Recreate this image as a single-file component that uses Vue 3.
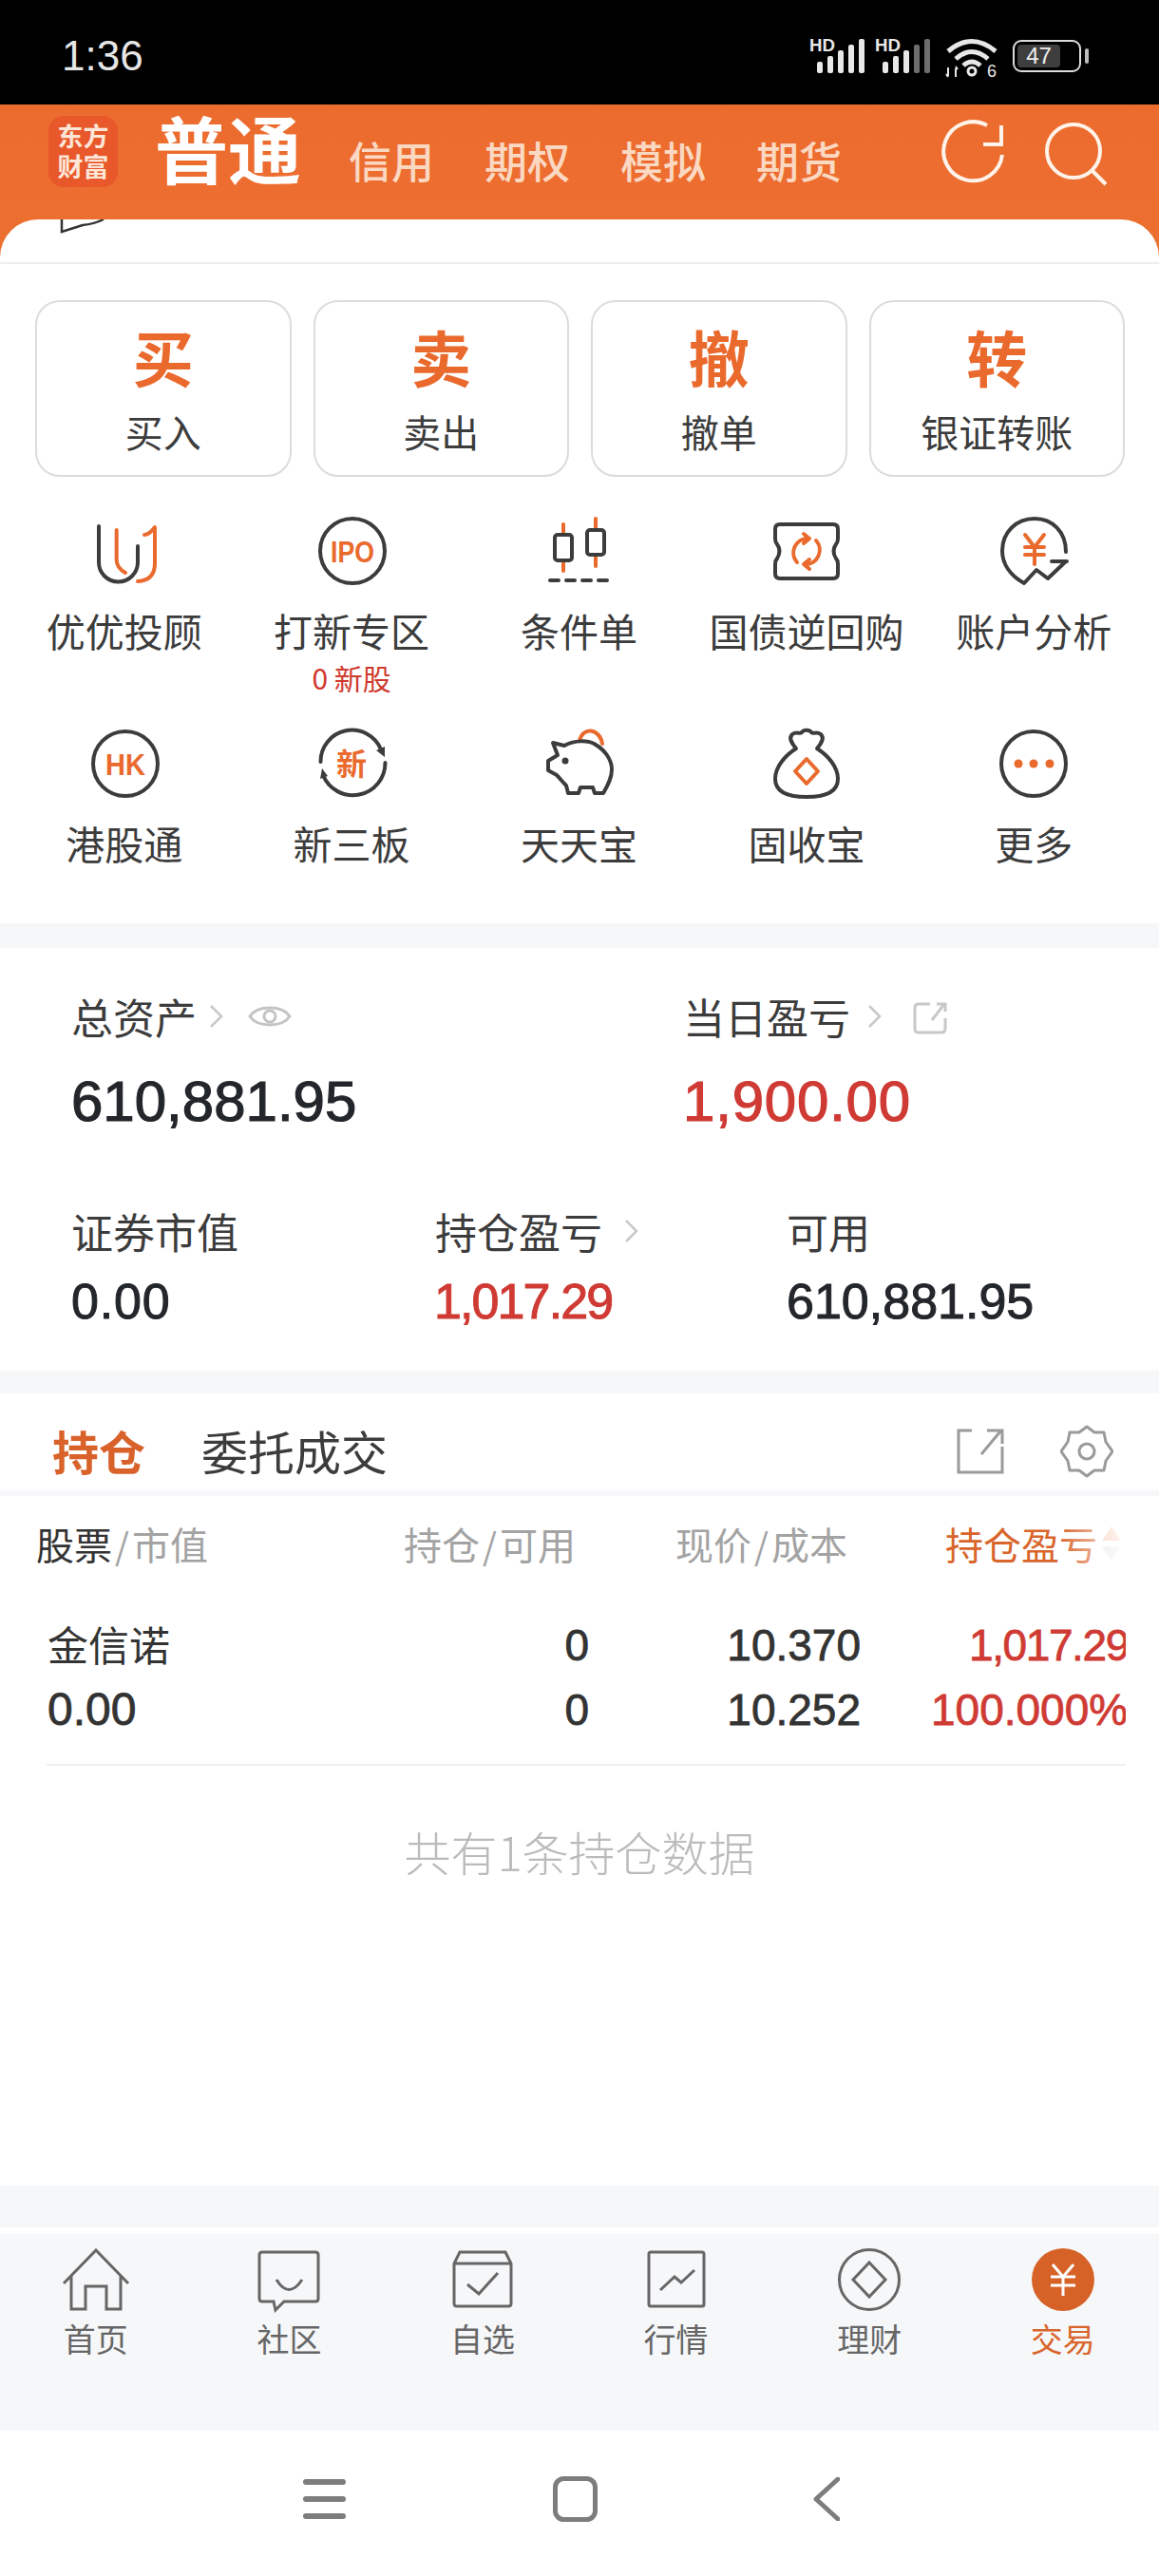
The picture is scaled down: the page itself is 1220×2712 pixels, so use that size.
<template>
  <div class="page">
    <!-- status bar -->
    <div class="statusbar">
      <span class="clock">1:36</span>
      <div class="status-icons">
        <svg v-for="(sig, i) in signals" :key="i" class="signal" width="60" height="38" viewBox="0 0 60 38">
          <text x="0" y="14" class="hd" textLength="27" lengthAdjust="spacingAndGlyphs">HD</text>
          <rect v-for="(b, j) in sig" :key="j" :x="8 + j * 11" :y="37 - b.h" width="6" :height="b.h" rx="2" :fill="b.c" />
        </svg>
        <svg class="wifi" width="56" height="42" viewBox="0 0 56 42">
          <g fill="none" stroke="#e8e8e8" stroke-width="5">
            <path d="M3 14 Q28 -7 53 14" />
            <path d="M11 22 Q28 7 45 22" />
            <path d="M19 29 Q28 21 37 29" />
          </g>
          <circle cx="28" cy="35" r="4" fill="none" stroke="#e8e8e8" stroke-width="3" />
          <path d="M3 31 v9 M3 41 l-2 -3 M11 41 v-9 M11 30 l2 3" stroke="#e8e8e8" stroke-width="2" fill="none" />
          <text x="44" y="41" class="six">6</text>
        </svg>
        <div class="battery"><span>47</span></div>
      </div>
    </div>

    <!-- orange head -->
    <div class="head">
      <div class="topbar">
        <div class="logo">东方<br />财富</div>
        <div class="title">普通</div>
        <div class="tabs">
          <span v-for="t in modeTabs" :key="t">{{ t }}</span>
        </div>
        <div class="top-actions">
          <svg width="70" height="70" viewBox="0 0 70 70" fill="none" stroke="#fff3ea" stroke-width="4">
            <path d="M50 7 A31 31 0 1 0 66 38" />
            <path d="M65 7 V27 H46" />
          </svg>
          <svg width="72" height="72" viewBox="0 0 72 72" fill="none" stroke="#fff3ea" stroke-width="4">
            <circle cx="34" cy="34" r="28" />
            <path d="M54 55 L68 69" />
          </svg>
        </div>
      </div>
      <div class="panel">
        <svg class="peek" width="50" height="16" viewBox="0 0 50 16" fill="none" stroke="#333" stroke-width="2.5">
          <path d="M2 0 V13 L24 6 Q36 5 46 0" />
        </svg>
        <div class="panel-line"></div>
        <div class="trade-btns">
          <div v-for="b in tradeBtns" :key="b.big" class="trade-btn">
            <span class="big">{{ b.big }}</span>
            <span class="small">{{ b.small }}</span>
          </div>
        </div>

        <div class="grid">
          <div class="cell">
            <svg class="ico" viewBox="0 0 80 80">
              <path class="dk" d="M13 14 V52 A20.5 20.5 0 0 0 54 52 V35" />
              <path class="og" d="M31.7 18 V50 Q32 58 41 63 M61 23 Q66 23 72 15 V53 Q72 71 54 72" />
            </svg>
            <div class="lbl">优优投顾</div>
          </div>
          <div class="cell">
            <svg class="ico" viewBox="0 0 80 80">
              <circle class="dk" cx="41" cy="40" r="34" />
              <text class="ico-txt" x="41" y="52" font-size="31" textLength="46" lengthAdjust="spacingAndGlyphs">IPO</text>
            </svg>
            <div class="lbl">打新专区</div>
            <div class="sub">0 新股</div>
          </div>
          <div class="cell">
            <svg class="ico" viewBox="0 0 80 80">
              <path class="og" d="M24 12 V61 M58 6 V56" />
              <rect class="dk fillw" x="15" y="23" width="18" height="27" rx="3" />
              <rect class="dk fillw" x="49" y="18" width="18" height="26" rx="3" />
              <path class="dk" d="M10 71 H72" stroke-dasharray="9 8" />
            </svg>
            <div class="lbl">条件单</div>
          </div>
          <div class="cell">
            <svg class="ico" viewBox="0 0 80 80">
              <path class="dk" d="M12 12 H68 Q73 12 73 17 V27 Q73 31 71 33 Q66 40 71 48 Q73 50 73 54 V64 Q73 69 68 69 H12 Q7 69 7 64 V54 Q7 50 9 48 Q14 40 9 33 Q7 31 7 27 V17 Q7 12 12 12 Z" />
              <path class="og" d="M30 52 A15 15 0 0 1 42 27 M37 22 L43 27 L37 32 M50 29 A15 15 0 0 1 38 54 M43 49 L37 54 L43 59" />
            </svg>
            <div class="lbl">国债逆回购</div>
          </div>
          <div class="cell">
            <svg class="ico" viewBox="0 0 80 80">
              <path class="dk" d="M74 41 C74 20 60 6 41 6 C22 6 7 20 7 40 C7 54 16 66 30 74 L43 60 L55 69 L74 51 M59 51 H75" />
              <path class="og" d="M31 23 L41 36 L51 23 M31 36 H51 M31 44 H51 M41 36 V54" />
            </svg>
            <div class="lbl">账户分析</div>
          </div>

          <div class="cell">
            <svg class="ico" viewBox="0 0 80 80">
              <circle class="dk" cx="41" cy="40" r="34" />
              <text class="ico-txt" x="41" y="52" font-size="32" textLength="42" lengthAdjust="spacingAndGlyphs">HK</text>
            </svg>
            <div class="lbl">港股通</div>
          </div>
          <div class="cell">
            <svg class="ico" viewBox="0 0 80 80">
              <path class="dk" d="M7.5 38 A33 33 0 0 1 71 25 M75.5 39 A34 34 0 0 1 10 52" />
              <path d="M66 26 L75 22 L75 33 Z M7 56 L9 45 L15 53 Z" fill="#3c3c3c" />
              <text class="ico-txt cjk" x="40" y="52" font-size="32">新</text>
            </svg>
            <div class="lbl">新三板</div>
          </div>
          <div class="cell">
            <svg class="ico" viewBox="0 0 80 80">
              <path class="og" stroke-width="5" d="M41 16 C44 1 62 2 65 19" />
              <path class="dk" d="M13 18 L25 21 C36 15 50 15 58 20 C68 26 75 36 75 46 C75 56 70 64 66 71 H57 L55 65 H42 L40 71 H29 L27 63 C23 59 20 55 17 52 L8 47 V37 L18 31 Z" />
              <circle cx="26" cy="37" r="3.5" fill="#3c3c3c" />
            </svg>
            <div class="lbl">天天宝</div>
          </div>
          <div class="cell">
            <svg class="ico" viewBox="0 0 80 80">
              <path class="dk" d="M29 24 C24 18 21 13 25 9 C29 6 33 9 35 7 C37 4 43 4 45 7 C47 9 51 6 55 9 C59 13 56 18 51 24 C62 31 73 43 73 56 C73 70 60 75 40 75 C20 75 7 70 7 56 C7 43 18 31 29 24 Z" />
              <path class="og" stroke-width="5" d="M40 35 L52 48 L40 61 L28 48 Z" />
            </svg>
            <div class="lbl">固收宝</div>
          </div>
          <div class="cell">
            <svg class="ico" viewBox="0 0 80 80">
              <circle class="dk" cx="40" cy="40" r="34" />
              <circle cx="24" cy="40" r="4.5" fill="#ea6a2d" />
              <circle cx="40" cy="40" r="4.5" fill="#ea6a2d" />
              <circle cx="57" cy="40" r="4.5" fill="#ea6a2d" />
            </svg>
            <div class="lbl">更多</div>
          </div>
        </div>
      </div>
    </div>

    <div class="gap"></div>

    <!-- assets -->
    <div class="assets">
      <div class="asset-row first">
        <div class="asset w644">
          <div class="a-label">总资产
            <svg class="chev near" width="15" height="26" viewBox="0 0 15 26"><path d="M2 2 L13 13 L2 24" /></svg>
            <svg class="eye" width="46" height="32" viewBox="0 0 46 32" fill="none" stroke="#c4c4c4" stroke-width="3">
              <path d="M2 16 C10 4 36 4 44 16 C36 28 10 28 2 16 Z" />
              <circle cx="23" cy="16" r="6" />
            </svg>
          </div>
          <div class="a-big">610,881.95</div>
        </div>
        <div class="asset">
          <div class="a-label">当日盈亏
            <svg class="chev" width="15" height="26" viewBox="0 0 15 26"><path d="M2 2 L13 13 L2 24" /></svg>
            <svg class="ext" width="36" height="36" viewBox="0 0 36 36" fill="none" stroke="#c8c8c8" stroke-width="3">
              <path d="M18 3 H6 Q2 3 2 7 V29 Q2 33 6 33 H30 Q34 33 34 29 V18 M20 20 L33 3 M25 3 H34 V11" />
            </svg>
          </div>
          <div class="a-big red wide">1,900.00</div>
        </div>
      </div>
      <div class="asset-row second">
        <div class="asset w383">
          <div class="a-label">证券市值</div>
          <div class="a-mid wide">0.00</div>
        </div>
        <div class="asset w370">
          <div class="a-label">持仓盈亏
            <svg class="chev far" width="15" height="26" viewBox="0 0 15 26"><path d="M2 2 L13 13 L2 24" /></svg>
          </div>
          <div class="a-mid red tight">1,017.29</div>
        </div>
        <div class="asset">
          <div class="a-label">可用</div>
          <div class="a-mid">610,881.95</div>
        </div>
      </div>
    </div>

    <div class="gap small"></div>

    <!-- holdings -->
    <div class="holdings">
      <div class="hold-tabs">
        <span class="tab active">持仓</span>
        <span class="tab">委托成交</span>
        <div class="hold-actions">
          <svg width="50" height="50" viewBox="0 0 50 50" fill="none" stroke="#9a9a9a" stroke-width="3">
            <path d="M16 3 H2 V47 H48 V20 M26 28 L46 4 M32 3 H48 V17" />
          </svg>
          <svg width="56" height="56" viewBox="0 0 56 56" fill="none" stroke="#9a9a9a" stroke-width="3">
            <path d="M28 2 L36 8 L46 8 L48 18 L55 28 L48 38 L46 48 L36 48 L28 54 L20 48 L10 48 L8 38 L1 28 L8 18 L10 8 L20 8 Z" stroke-linejoin="round" />
            <circle cx="28" cy="28" r="8" />
          </svg>
        </div>
      </div>
      <div class="strip"></div>
      <div class="thead">
        <div><b>股票</b><i>/</i>市值</div>
        <div>持仓<i>/</i>可用</div>
        <div>现价<i>/</i>成本</div>
        <div class="sorted">持仓盈亏
          <svg class="sort" width="22" height="38" viewBox="0 0 22 38">
            <path d="M11 1 L21 16 H1 Z" fill="#f6c3a6" />
            <path d="M11 37 L21 22 H1 Z" fill="#e6e6e6" />
          </svg>
        </div>
      </div>
      <div class="rows">
        <div class="row">
          <div class="name">金信诺</div>
          <div class="num">0</div>
          <div class="num">10.370</div>
          <div class="pl pl-a">1,017.29</div>
        </div>
        <div class="row">
          <div class="name digits">0.00</div>
          <div class="num">0</div>
          <div class="num">10.252</div>
          <div class="pl pl-b">100.000%</div>
        </div>
      </div>
      <div class="divider"></div>
      <div class="empty">共有1条持仓数据</div>
    </div>

    <div class="gap foot"></div>
    <div class="white-sep"></div>

    <!-- bottom tabs -->
    <div class="navbar">
      <div class="nav-item">
        <svg class="nav-ico" viewBox="0 0 72 68">
          <path d="M2 37 L36 2 L70 37 M10 28 V64 H25 V40 H47 V64 H62 V28" />
        </svg>
        <span>首页</span>
      </div>
      <div class="nav-item">
        <svg class="nav-ico" viewBox="0 0 72 68">
          <path d="M8 4 H64 Q67 4 67 7 V53 Q67 56 64 56 H31 L22 65 L20 56 H8 Q5 56 5 53 V7 Q5 4 8 4 Z M23 33 Q36 54 50 33" />
        </svg>
        <span>社区</span>
      </div>
      <div class="nav-item">
        <svg class="nav-ico" viewBox="0 0 72 68">
          <path d="M12 4 H60 L66 16 V58 Q66 61 63 61 H9 Q6 61 6 58 V16 Z M6 16 H66 M20 38 L32 48 L52 26" />
        </svg>
        <span>自选</span>
      </div>
      <div class="nav-item">
        <svg class="nav-ico" viewBox="0 0 72 68">
          <path d="M9 4 H63 Q65 4 65 6 V59 Q65 61 63 61 H9 Q7 61 7 59 V6 Q7 4 9 4 Z M19 44 L34 30 L41 36 L55 23" />
        </svg>
        <span>行情</span>
      </div>
      <div class="nav-item">
        <svg class="nav-ico" viewBox="0 0 72 68">
          <circle cx="36" cy="33" r="31.5" />
          <path d="M36 15 L53 33 L36 51 L19 33 Z" />
        </svg>
        <span>理财</span>
      </div>
      <div class="nav-item on">
        <svg class="nav-ico" viewBox="0 0 72 68">
          <circle cx="36" cy="33" r="33" fill="#d76228" stroke="none" />
          <path class="yen" d="M25 17 L36 30 L47 17 M23 30 H49 M23 39 H49 M36 30 V50" />
        </svg>
        <span>交易</span>
      </div>
    </div>

    <!-- system nav -->
    <div class="sysnav">
      <svg class="sys-menu" width="45" height="42" viewBox="0 0 45 42">
        <rect y="0" width="45" height="6" rx="3" />
        <rect y="18" width="45" height="6" rx="3" />
        <rect y="36" width="45" height="6" rx="3" />
      </svg>
      <svg class="sys-home" width="47" height="48" viewBox="0 0 47 48">
        <rect x="2.5" y="2.5" width="42" height="43" rx="9" fill="none" stroke="#7d7d7d" stroke-width="5" />
      </svg>
      <svg class="sys-back" width="28" height="46" viewBox="0 0 28 46">
        <path d="M26 2 L3 23 L26 44" fill="none" stroke="#7d7d7d" stroke-width="5" stroke-linecap="round" stroke-linejoin="round" />
      </svg>
    </div>
  </div>
</template>

<script setup>
const modeTabs = ["信用", "期权", "模拟", "期货"];

const tradeBtns = [
  { big: "买", small: "买入" },
  { big: "卖", small: "卖出" },
  { big: "撤", small: "撤单" },
  { big: "转", small: "银证转账" },
];

// signal bars, second sim only has three lit
const heights = [12, 18, 24, 30, 36];
const signals = [
  heights.map((h) => ({ h, c: "#e8e8e8" })),
  heights.map((h, i) => ({ h, c: i > 2 ? "#6e6e6e" : "#e8e8e8" })),
];
</script>

<style>
html,
body {
  margin: 0;
  background: #fff;
}
</style>

<style scoped>
.page {
  width: 1220px;
  height: 2712px;
  display: flex;
  flex-direction: column;
  overflow: hidden;
  background: #fff;
  color: #3c3c3c;
  font-family: "Noto Sans CJK SC", "Liberation Sans", sans-serif;
}

/* status bar */
.statusbar {
  height: 110px;
  flex: none;
  background: #000;
  display: flex;
  align-items: flex-start;
  justify-content: space-between;
  padding: 40px 82px 0 65px;
  box-sizing: border-box;
}
.clock {
  font-family: "Liberation Sans", sans-serif;
  font-size: 44px;
  line-height: 38px;
  color: #e6e6e6;
}
.status-icons {
  display: flex;
  align-items: flex-start;
  gap: 9px;
}
.signal,
.wifi {
  overflow: visible;
}
.hd {
  font-family: "Liberation Sans", sans-serif;
  font-size: 18px;
  font-weight: 700;
  fill: #e8e8e8;
}
.six {
  font-family: "Liberation Sans", sans-serif;
  font-size: 18px;
  fill: #e8e8e8;
}
.wifi {
  margin: 0 6px 0 5px;
}
.battery {
  position: relative;
  width: 72px;
  height: 34px;
  margin-top: 2px;
  box-sizing: border-box;
  border: 2.5px solid #dcdcdc;
  border-radius: 9px;
  padding: 3px;
  display: flex;
}
.battery::after {
  content: "";
  position: absolute;
  right: -10px;
  top: 7px;
  width: 4px;
  height: 16px;
  border-radius: 2px;
  background: #bdbdbd;
}
.battery span {
  width: 45px;
  border-radius: 4px;
  background: #3e3e3e;
  color: #eee;
  font-family: "Liberation Sans", sans-serif;
  font-size: 24px;
  line-height: 23px;
  text-align: center;
}

/* head */
.head {
  background: linear-gradient(#ec6b2e, #ee7634 40%);
  flex: none;
}
.topbar {
  height: 121px;
  box-sizing: border-box;
  padding: 12px 52px 0 51px;
  display: flex;
  align-items: flex-start;
}
.logo {
  width: 73px;
  height: 75px;
  border-radius: 16px;
  background: #e8582a;
  color: #fde6d8;
  font-size: 27px;
  font-weight: 700;
  line-height: 32px;
  text-align: center;
  padding-top: 5px;
  box-sizing: border-box;
}
.title {
  margin-left: 39px;
  font-size: 77px;
  line-height: 66px;
  font-weight: 700;
  color: #fff;
}
.tabs {
  display: flex;
  gap: 53px;
  margin-left: 50px;
  padding-top: 21px;
  font-size: 45px;
  line-height: 52px;
  font-weight: 500;
  color: #fbd8c2;
}
.top-actions {
  margin-left: auto;
  display: flex;
  gap: 37px;
  align-items: flex-start;
  margin-top: 3px;
}

.panel {
  position: relative;
  height: 741px;
  background: #fff;
  border-radius: 40px 40px 0 0;
  overflow: hidden;
}
.peek {
  position: absolute;
  left: 63px;
  top: 0;
}
.panel-line {
  height: 2px;
  margin-top: 45px;
  background: #eeeeee;
}
.trade-btns {
  display: grid;
  grid-template-columns: repeat(4, 1fr);
  gap: 23px;
  padding: 0 36px 0 37px;
  margin-top: 38px;
}
.trade-btn {
  height: 186px;
  box-sizing: border-box;
  border: 2px solid #dcdcdc;
  border-radius: 26px;
  display: flex;
  flex-direction: column;
  align-items: center;
  padding-top: 18px;
}
.trade-btn .big {
  font-size: 64px;
  line-height: 76px;
  font-weight: 700;
  color: #ea6a2d;
}
.trade-btn .small {
  font-size: 40px;
  line-height: 56px;
  margin-top: 14px;
}

.grid {
  display: grid;
  grid-template-columns: repeat(5, 1fr);
  grid-template-rows: 224px 208px;
  padding: 38px 12px 0 11px;
}
.cell {
  display: flex;
  flex-direction: column;
  align-items: center;
}
.ico {
  width: 80px;
  height: 80px;
}
.dk,
.og {
  fill: none;
  stroke-width: 4;
  stroke-linecap: round;
  stroke-linejoin: round;
}
.dk {
  stroke: #3c3c3c;
}
.og {
  stroke: #ea6a2d;
}
.dk.fillw {
  fill: #fff;
}
.ico-txt {
  font-family: "Liberation Sans", sans-serif;
  font-weight: 700;
  fill: #ea6a2d;
  text-anchor: middle;
}
.ico-txt.cjk {
  font-family: "Noto Sans CJK SC", sans-serif;
}
.lbl {
  margin-top: 15px;
  font-size: 41px;
  line-height: 56px;
  white-space: nowrap;
}
.sub {
  margin-top: 4px;
  font-size: 30px;
  line-height: 36px;
  color: #d0392e;
}

.gap {
  flex: none;
  height: 26px;
  background: #f6f7f9;
}
.gap.small {
  height: 24px;
}
.gap.foot {
  height: 44px;
}
.white-sep {
  flex: none;
  height: 7px;
}

/* assets */
.assets {
  flex: none;
  height: 445px;
  box-sizing: border-box;
  padding: 44px 0 0 75px;
}
.asset-row {
  display: flex;
}
.asset-row.second {
  margin-top: 73px;
}
.w644 {
  width: 644px;
}
.w383 {
  width: 383px;
}
.w370 {
  width: 370px;
}
.a-label {
  font-size: 44px;
  line-height: 56px;
  height: 56px;
  display: flex;
  align-items: center;
  white-space: nowrap;
}
.chev {
  margin-left: 18px;
  fill: none;
  stroke: #c8c8c8;
  stroke-width: 2.5;
}
.chev.near {
  margin-left: 13px;
}
.chev.far {
  margin-left: 23px;
}
.eye {
  margin-left: 26px;
}
.ext {
  margin: 4px 0 0 33px;
}
.a-big,
.a-mid,
.num,
.pl,
.digits {
  font-family: "Liberation Sans", sans-serif;
  -webkit-text-stroke: 0.8px currentColor;
}
.a-big {
  margin-top: 27px;
  font-size: 60px;
  line-height: 70px;
  color: #23262b;
  -webkit-text-stroke-width: 1.2px;
}
.a-mid {
  margin-top: 16px;
  font-size: 52px;
  line-height: 60px;
  color: #23262b;
  -webkit-text-stroke-width: 1px;
}
.red {
  color: #cf3b34;
}
.wide {
  letter-spacing: 0.8px;
}
.a-mid.tight {
  margin-left: -1px;
  letter-spacing: -1.9px;
}

/* holdings */
.holdings {
  flex: 1;
  min-height: 0;
}
.hold-tabs {
  height: 102px;
  box-sizing: border-box;
  padding: 0 48px 0 55px;
  display: flex;
  align-items: center;
  gap: 59px;
}
.tab {
  font-size: 49px;
  line-height: 60px;
  padding-top: 17px;
}
.tab.active {
  font-weight: 700;
  color: #d9622b;
}
.hold-actions {
  margin-left: auto;
  display: flex;
  gap: 59px;
  align-items: center;
  padding-top: 19px;
}
.strip {
  height: 6px;
  background: #f6f7f9;
}
.thead {
  position: relative;
  height: 100px;
  box-sizing: border-box;
  padding-left: 38px;
  width: 1185px;
  overflow: hidden;
  display: grid;
  grid-template-columns: 387px 286px 284px 190px;
  align-items: center;
  font-size: 40px;
  line-height: 92px;
  color: #a3a3a3;
  white-space: nowrap;
}
.thead b {
  font-weight: 400;
  color: #333;
}
.thead i {
  font-style: normal;
  margin: 0 3px;
  font-size: 38px;
}
.sorted {
  color: #d9652b;
  display: flex;
  align-items: center;
}
/* right edge fades out */
.sorted::after {
  content: "";
  position: absolute;
  right: 0;
  top: 0;
  width: 70px;
  height: 100%;
  background: linear-gradient(90deg, rgba(255, 255, 255, 0), rgba(255, 255, 255, 0.85));
}
.sort {
  margin-left: 4px;
}
.rows {
  padding-top: 23px;
  padding-bottom: 23px;
}
.row {
  width: 1185px;
  box-sizing: border-box;
  padding-left: 50px;
  display: grid;
  grid-template-columns: 300px 270px 286px 279px;
  font-size: 46px;
  line-height: 68px;
  color: #333;
  white-space: nowrap;
}
.name {
  font-size: 43px;
  line-height: 64px;
}
.digits {
  font-size: 48px;
  line-height: 68px;
}
.num {
  text-align: right;
}
.pl {
  overflow: hidden;
  color: #cf3b34;
}
.pl-a {
  padding-left: 114px;
  letter-spacing: -1.4px;
}
.pl-b {
  padding-left: 74px;
}
.divider {
  height: 2px;
  margin: 0 35px 0 49px;
  background: #f0f0f0;
}
.empty {
  margin-top: 55px;
  text-align: center;
  font-size: 49px;
  line-height: 70px;
  font-weight: 300;
  color: #bbbbbb;
}

/* bottom tabs */
.navbar {
  flex: none;
  height: 207px;
  background: #f6f7f9;
  display: grid;
  grid-template-columns: repeat(6, 203.6px);
  padding: 15px 0 0 0;
  box-sizing: border-box;
}
.nav-item {
  display: flex;
  flex-direction: column;
  align-items: center;
  font-size: 34px;
  line-height: 44px;
  color: #666;
  transform: translateX(-1px);
}
.nav-item.on {
  color: #d9652b;
}
.nav-ico {
  width: 72px;
  height: 68px;
  margin-bottom: 5px;
  fill: none;
  stroke: #666;
  stroke-width: 3;
}
.nav-ico .yen {
  stroke: #fff;
}

/* system nav */
.sysnav {
  flex: none;
  height: 153px;
  box-sizing: border-box;
  padding: 0 0 9px 319px;
  display: flex;
  align-items: center;
}
.sys-menu {
  fill: #7d7d7d;
}
.sys-home {
  margin-left: 218px;
}
.sys-back {
  margin-left: 227px;
}
</style>
